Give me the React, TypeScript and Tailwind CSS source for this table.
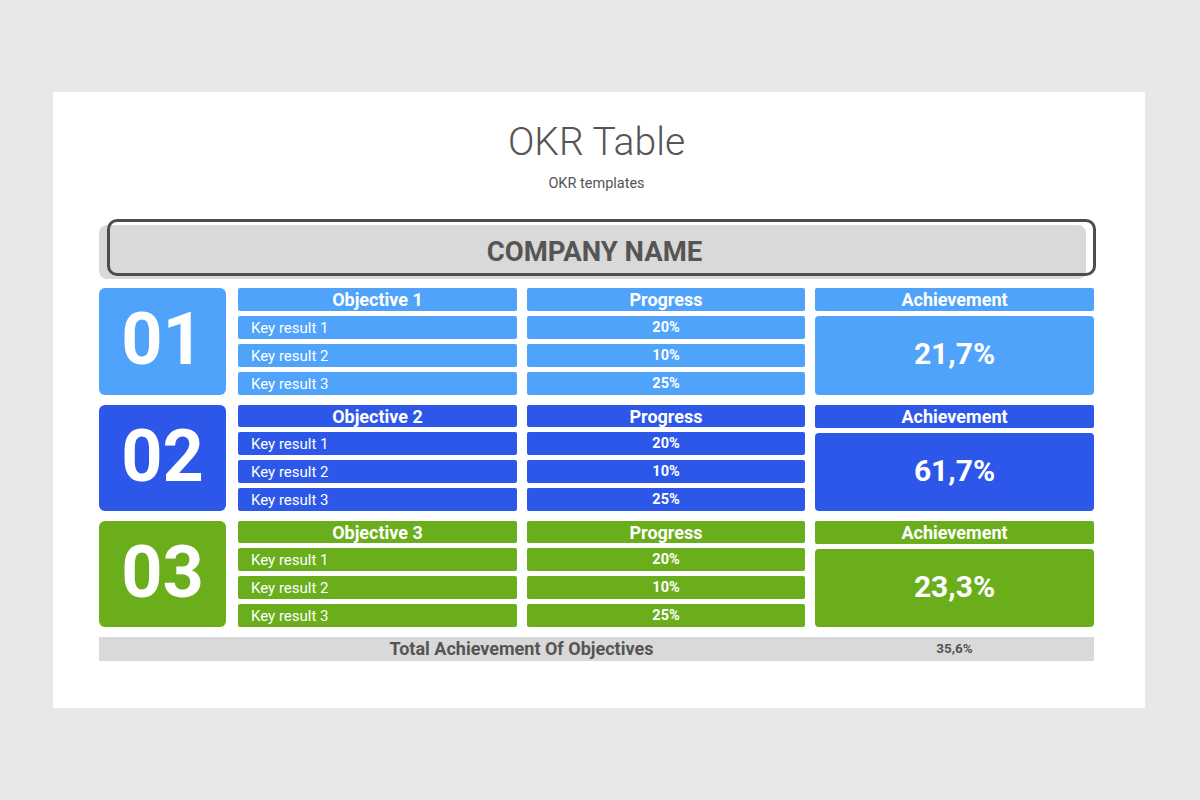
import React from "react";

type Obj = {
  num: string;
  title: string;
  ach: string;
  bg: string;
  h: string;
};

const objs: Obj[] = [
  { num: "01", title: "Objective 1", ach: "21,7%", bg: "bg-[#4fa3fb]", h: "h-[107px]" },
  { num: "02", title: "Objective 2", ach: "61,7%", bg: "bg-[#2c57e9]", h: "h-[106px]" },
  { num: "03", title: "Objective 3", ach: "23,3%", bg: "bg-[#6aae1b]", h: "h-[106px]" },
];

const krs = [
  { name: "Key result 1", p: "20%" },
  { name: "Key result 2", p: "10%" },
  { name: "Key result 3", p: "25%" },
];

function Row({ o }: { o: Obj }) {
  const cell = `${o.bg} rounded-[2px] flex-1 basis-0 min-h-0 leading-none pt-[2px] flex items-center text-white`;
  return (
    <div className={`flex ${o.h}`}>
      <div className={`${o.bg} w-[127px] rounded-[6px] flex items-center justify-center text-white font-bold text-[72px] leading-none`}>
        <span className="pb-[2px]">{o.num}</span>
      </div>
      <div className="w-[279px] ml-[12px] flex flex-col gap-[5px]">
        <div className={`${cell} justify-center font-bold text-[18px]`}>{o.title}</div>
        {krs.map((k) => (
          <div key={k.name} className={`${cell} pl-[13px] text-[15px]`}>
            {k.name}
          </div>
        ))}
      </div>
      <div className="w-[278px] ml-[10px] flex flex-col gap-[5px]">
        <div className={`${cell} justify-center font-bold text-[18px]`}>Progress</div>
        {krs.map((k) => (
          <div key={k.name} className={`${cell} justify-center font-bold text-[14.5px]`}>
            {k.p}
          </div>
        ))}
      </div>
      <div className="w-[279px] ml-[10px] flex flex-col gap-[5px]">
        <div className={`${o.bg} rounded-[2px] h-[23px] shrink-0 leading-none pt-[2px] flex items-center justify-center text-white font-bold text-[18px]`}>Achievement</div>
        <div className={`${o.bg} rounded-[4px] flex-1 min-h-0 flex items-center justify-center text-white font-bold text-[30px] leading-none pb-[2px]`}>
          {o.ach}
        </div>
      </div>
    </div>
  );
}

export default function App() {
  return (
    <div
      className="w-[1200px] h-[800px] bg-[#e9e7e8] pt-[92px] pl-[53px]"
      style={{ fontFamily: "Roboto, 'Liberation Sans', sans-serif" }}
    >
      <div className="w-[1092px] h-[616px] bg-white flex flex-col pt-[31px] pl-[46px]">
        <div className="w-[995px] flex flex-col items-center">
          <div className="text-[39px] font-light leading-none text-[#555555] h-[40px]">OKR Table</div>
          <div className="text-[14.5px] leading-none text-[#555555] mt-[14px]">OKR templates</div>
        </div>
        <div className="w-[995px] flex flex-col mt-[27px]">
          <div className="relative h-[61px]">
            <div className="absolute left-0 top-[6px] w-[987px] h-[54px] bg-[#d9d9d9] rounded-[8px]" />
            <div className="absolute left-[8px] top-0 w-[989px] h-[57px] border-[3px] border-[#4d4d4d] rounded-[10px] flex items-center justify-center">
              <span className="text-[27.5px] font-bold text-[#555555] leading-none -ml-[14px] mt-[9px]">COMPANY NAME</span>
            </div>
          </div>
          <div className="flex flex-col gap-[10px] mt-[8px]">
            {objs.map((o) => (
              <Row key={o.num} o={o} />
            ))}
            <div className="h-[24px] bg-[#d9d9d9] flex items-center text-[#555555] font-bold">
              <div className="w-[139px]" />
              <div className="w-[567px] text-center text-[18px]">Total Achievement Of Objectives</div>
              <div className="w-[289px] pl-[10px] text-center text-[13.5px]">35,6%</div>
            </div>
          </div>
        </div>
      </div>
    </div>
  );
}
